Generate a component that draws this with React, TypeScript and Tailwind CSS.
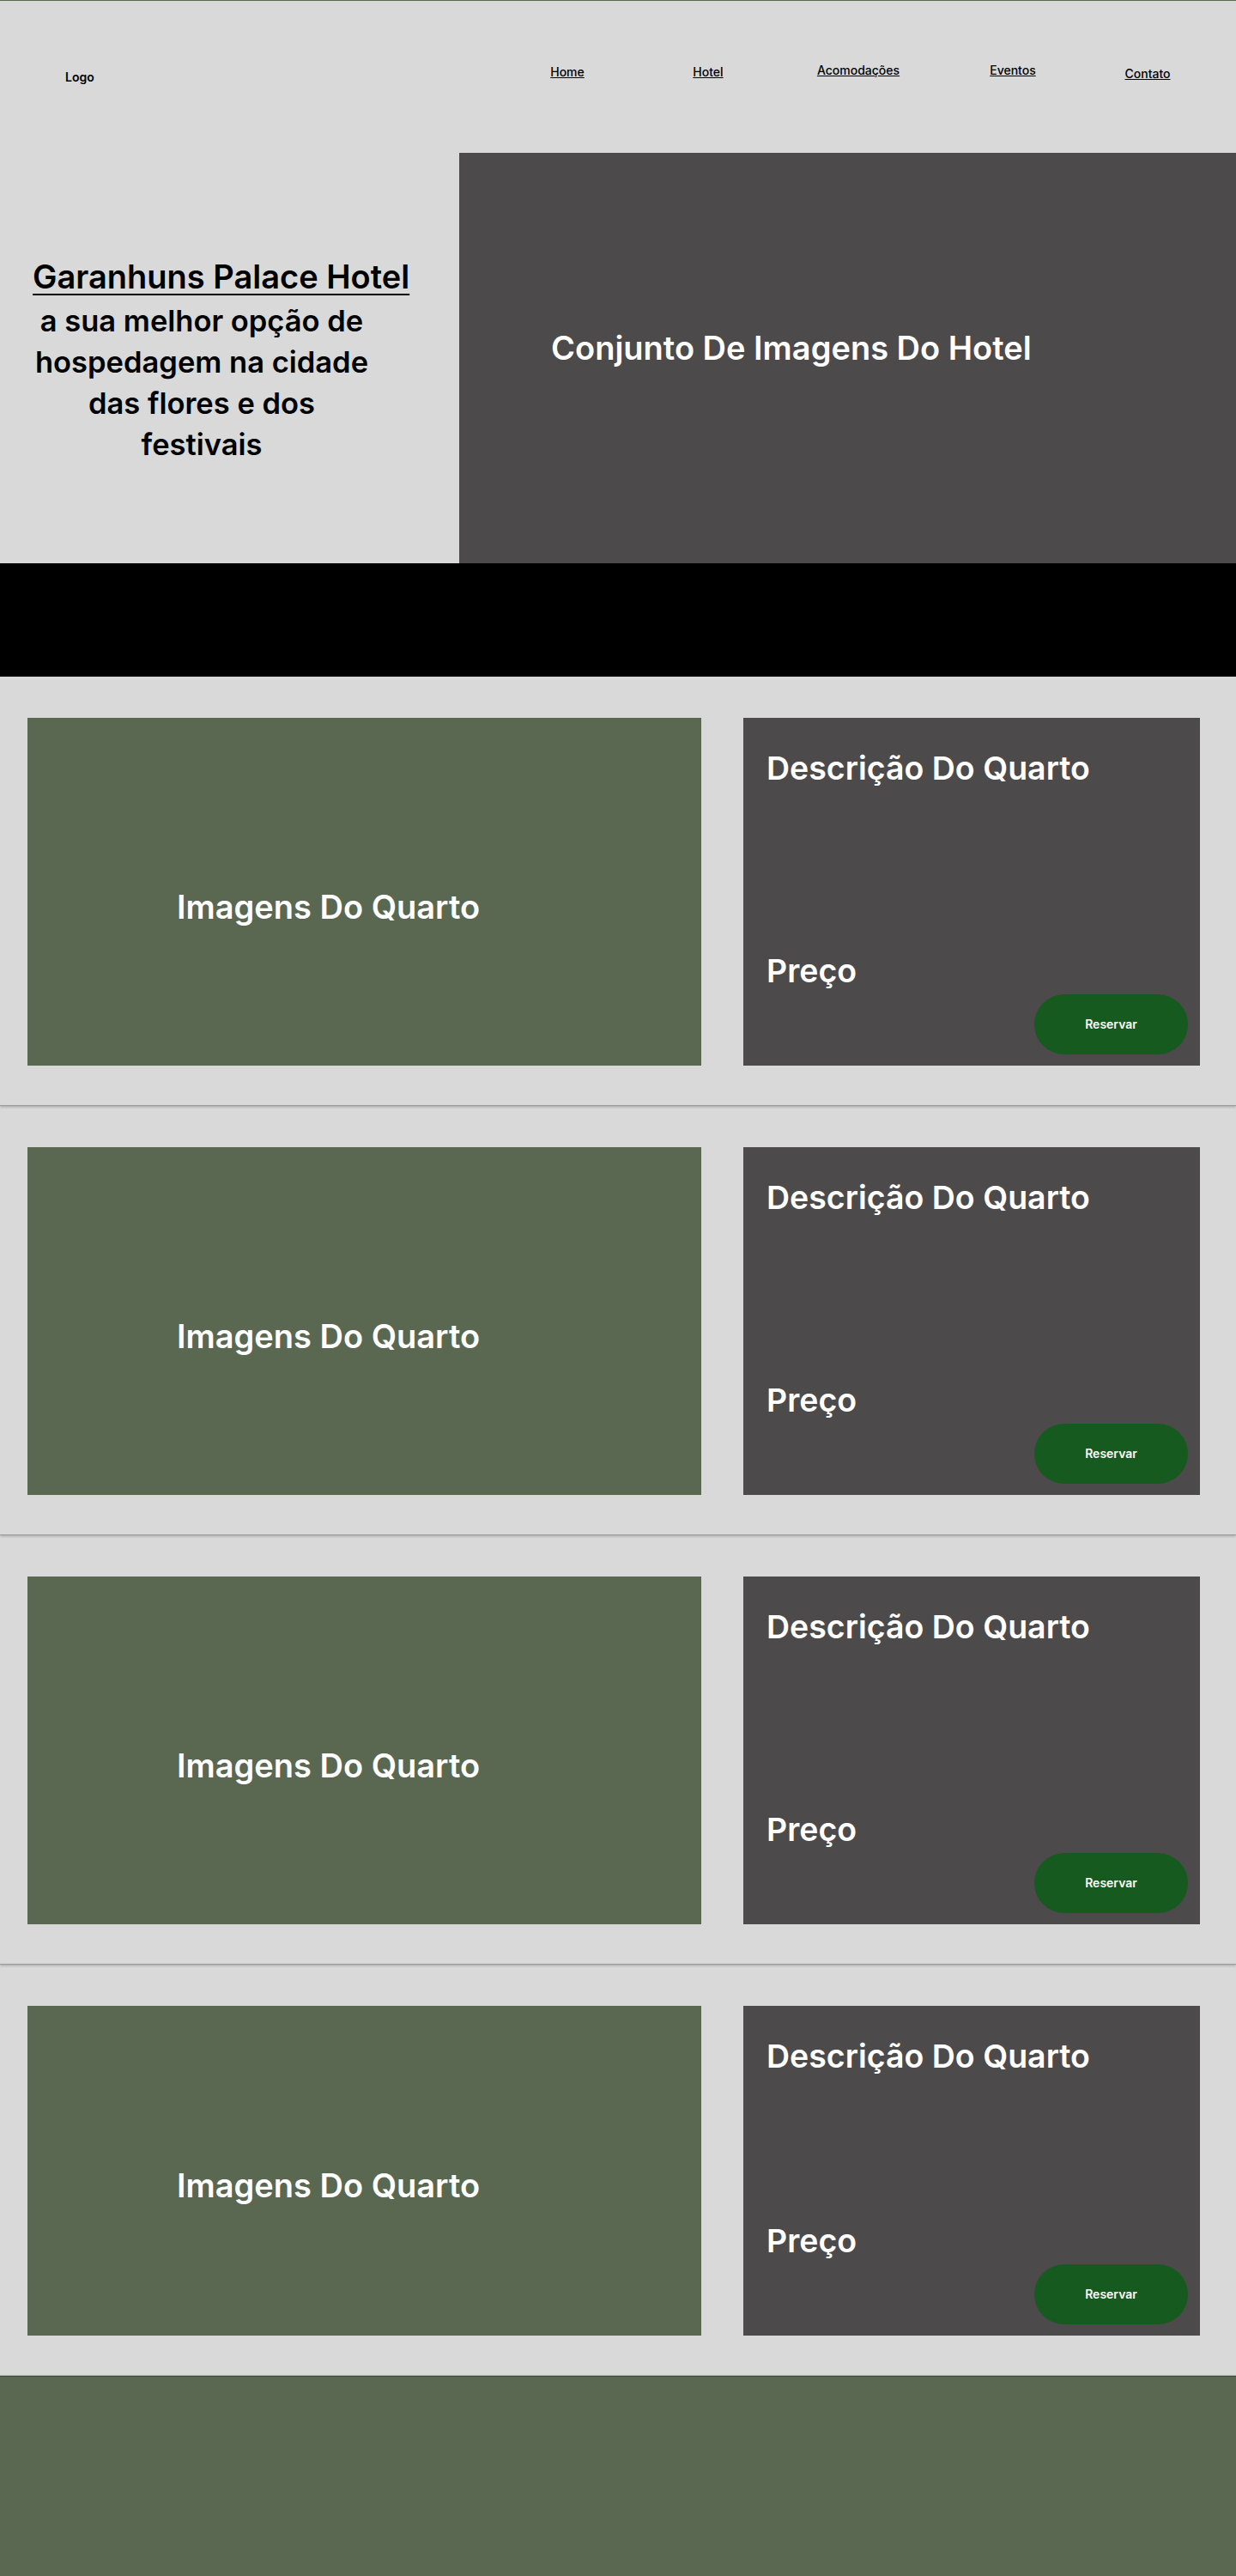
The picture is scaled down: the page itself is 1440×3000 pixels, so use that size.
const navItems = [
  { label: "Home", spacing: "ml-0", offset: "mt-[2px]" },
  { label: "Hotel", spacing: "ml-[44px]", offset: "mt-[2px]" },
  { label: "Acomodações", spacing: "ml-[55px]", offset: "mt-0" },
  { label: "Eventos", spacing: "ml-[60px]", offset: "mt-0" },
  { label: "Contato", spacing: "ml-[37px]", offset: "mt-[4px]" },
];

const rooms = [
  { id: 1, height: "h-[405px]" },
  { id: 2, height: "h-[405px]" },
  { id: 3, height: "h-[405px]" },
  { id: 4, height: "h-[384px]" },
];

function RoomRow({ height }: { height: string }) {
  return (
    <section className="border-b border-[#a3a3a3] pt-[48px] pb-[46px] shadow-[0_1px_3px_rgba(0,0,0,0.25)]">
      <div className="flex">
        <div
          className={`ml-[32px] flex ${height} w-[785px] items-center bg-[#5a6751] pt-[34px] pl-[174px]`}
        >
          <h3 className="text-[38px] leading-none font-semibold text-white">
            Imagens Do Quarto
          </h3>
        </div>

        <div
          className={`ml-[49px] flex ${height} w-[532px] flex-col bg-[#4c4a4b] pt-[40px] pr-[14px] pb-[13px] pl-[27px]`}
        >
          <h3 className="text-[37.5px] leading-none font-semibold text-white">
            Descrição Do Quarto
          </h3>

          <p className="mt-auto text-[37.5px] leading-none font-semibold text-white">
            Preço
          </p>

          <button className="mt-[9px] h-[70px] w-[179px] self-end rounded-full bg-[#165a1f] text-sm font-semibold text-white">
            Reservar
          </button>
        </div>
      </div>
    </section>
  );
}

export default function App() {
  return (
    <div className="min-h-[3000px] bg-[#d9d9d9] font-['Inter','Noto_Sans',sans-serif] text-black">
      <header className="flex h-[178px] items-start border-t border-[#5a6751]">
        <div className="mt-[79px] pl-[76px] text-sm leading-5 font-semibold">
          Logo
        </div>

        <nav className="mt-[71px] ml-auto flex pr-[43px]">
          {navItems.map((item) => (
            <div
              key={item.label}
              className={`${item.spacing} flex w-[120px] justify-center`}
            >
              <a
                className={`${item.offset} text-sm leading-5 font-medium underline`}
              >
                {item.label}
              </a>
            </div>
          ))}
        </nav>
      </header>

      <section className="flex h-[478px]">
        <div className="flex w-[535px] flex-col justify-center pt-[8px]">
          <h1 className="mb-[6px] ml-[38px] text-[38px] leading-[44px] font-semibold underline decoration-2 underline-offset-[6px]">
            Garanhuns Palace Hotel
          </h1>
          <p className="w-[470px] text-center text-[34.5px] leading-[48px] font-semibold">
            a sua melhor opção de
            <br />
            hospedagem na cidade
            <br />
            das flores e dos
            <br />
            festivais
          </p>
        </div>

        <div className="flex flex-1 items-center bg-[#4c4a4b] pb-[24px] pl-[107px]">
          <h2 className="text-[38px] leading-none font-semibold text-white">
            Conjunto De Imagens Do Hotel
          </h2>
        </div>
      </section>

      <div className="h-[132px] bg-black" />

      {rooms.map((room) => (
        <RoomRow key={room.id} height={room.height} />
      ))}

      <footer className="h-[260px] border-t border-[#3f473a] bg-[#5a6751]" />
    </div>
  );
}
